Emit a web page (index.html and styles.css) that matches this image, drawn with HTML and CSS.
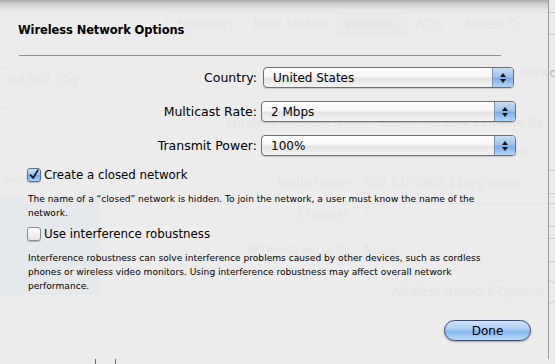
FILE: index.html
```html
<!DOCTYPE html>
<html>
<head>
<meta charset="utf-8">
<link rel="stylesheet" href="styles.css">
</head>
<body>
<div class="screen">
  <div class="ghost" aria-hidden="true">
    <div class="g-tabs">
      <span class="g-tab t1">Summary</span><span class="g-tab t2">Base Station</span><span class="g-tab t3 g-sel">Wireless</span><span class="g-tab t4">WDS</span><span class="g-tab t5">Access Co</span>
    </div>
    <div class="g-box g-box1"></div>
    <div class="g-box g-box2"></div>
    <div class="g-txt" style="left:6px;top:73px">old 802.11g</div>
    <div class="g-txt" style="left:520px;top:66px">netwo</div>
    <div class="g-txt" style="left:226px;top:116px">Wireless Network Name:</div>
    <div class="g-txt" style="left:380px;top:116px">Home Network Extreme Ba</div>
    <div class="g-txt" style="left:496px;top:145px">to be</div>
    <div class="g-txt" style="left:4px;top:174px">ress</div>
    <div class="g-txt" style="left:277px;top:176px">Radio Mode:</div>
    <div class="g-field" style="left:356px;top:170px;width:204px"></div>
    <div class="g-txt" style="left:364px;top:176px">802.11n (802.11b/g comp</div>
    <div class="g-txt" style="left:298px;top:208px">Channel:</div>
    <div class="g-field" style="left:356px;top:203px;width:204px"></div>
    <div class="g-txt" style="left:364px;top:208px">1</div>
    <div class="g-txt" style="left:247px;top:243px">Wireless Security:</div>
    <div class="g-field" style="left:356px;top:238px;width:204px"></div>
    <div class="g-txt" style="left:364px;top:243px">None</div>
    <div class="g-field g-btn" style="left:356px;top:280px;width:204px"></div>
    <div class="g-txt" style="left:390px;top:285px">Wireless Network Options</div>
    <div class="g-list"></div>
  </div>

  <div class="sheet">
    <h1 class="title">Wireless Network Options</h1>
    <div class="rule"></div>

    <div class="form">
      <label class="lbl">Country:</label>
      <div class="popup popup-country"><span class="pv">United States</span><span class="arrows"><i class="up"></i><i class="dn"></i></span></div>
      <label class="lbl">Multicast Rate:</label>
      <div class="popup"><span class="pv">2 Mbps</span><span class="arrows"><i class="up"></i><i class="dn"></i></span></div>
      <label class="lbl">Transmit Power:</label>
      <div class="popup"><span class="pv">100%</span><span class="arrows"><i class="up"></i><i class="dn"></i></span></div>
    </div>

    <div class="opt">
      <div class="check-row">
        <span class="cb cb-on"><svg viewBox="0 0 14 14" width="14" height="14"><path d="M3 7.2 L6 10.5 L11.5 1.5" fill="none" stroke="#1a1a2e" stroke-width="2" stroke-linecap="round" stroke-linejoin="round"/></svg></span>
        <span class="ct">Create a closed network</span>
      </div>
      <p class="desc">The name of a “closed” network is hidden. To join the network, a user must know the name of the<br>network.</p>
    </div>

    <div class="opt opt2">
      <div class="check-row">
        <span class="cb"></span>
        <span class="ct">Use interference robustness</span>
      </div>
      <p class="desc">Interference robustness can solve interference problems caused by other devices, such as cordless<br>phones or wireless video monitors. Using interference robustness may affect overall network<br>performance.</p>
    </div>

    <div class="actions">
      <button class="done">Done</button>
    </div>
  </div>
  <div class="under"><span class="u1"></span><span class="u2"></span></div>
</div>
</body>
</html>
```

FILE: styles.css
```css
* { box-sizing: border-box; }
html, body { margin: 0; padding: 0; }
body {
  width: 555px; height: 364px; overflow: hidden;
  background: #8c8c8c;
  font-family: "DejaVu Sans", "Liberation Sans", sans-serif;
  color: #000;
}
.screen { position: relative; width: 555px; height: 364px; background: #ececec; }

/* ghost window underneath (seen through the translucent sheet) */
.ghost { position: absolute; inset: 0; color: #b4b4b4; font-size: 12px; filter: blur(0.7px); }
.g-tabs {
  position: absolute; left: 166px; top: 12px; width: 400px; height: 23px;
  border: 1px solid #cdcdcd; border-radius: 4px; display: flex; white-space: nowrap;
}
.g-tab { padding-top: 4px; border-right: 1px solid #d0d0d0; font-size: 12px; text-align: center; }
.t1 { width: 79px; } .t2 { width: 92px; } .t3 { width: 68px; } .t4 { width: 49px; } .t5 { width: 112px; border-right: 0; text-align: left; padding-left: 10px; }
.g-sel { background: #dcdcdc; }
.g-txt { position: absolute; white-space: nowrap; }
.g-field { position: absolute; height: 24px; border: 1px solid #d0d0d0; border-radius: 3px; }
.g-btn { border-radius: 12px; }
.g-box { position: absolute; border: 1px solid #d0d0d0; border-radius: 4px; }
.g-box1 { left: -6px; top: 30px; width: 18px; height: 38px; }
.g-box2 { left: -6px; top: 108px; width: 18px; height: 58px; }
.g-list { position: absolute; left: 0; top: 196px; width: 100px; height: 99px; background: #c6d6e6; }

.sheet {
  position: relative; z-index: 1;
  width: 549px; height: 359px;
  background:
    linear-gradient(rgba(0,0,0,.28) 0, rgba(0,0,0,.12) 4px, rgba(0,0,0,.02) 10px, rgba(0,0,0,0) 13px),
    rgba(236,236,236,.84);
  border-right: 1px solid #9a9a9a;
  padding: 23px 0 0 18px;
  display: flex; flex-direction: column;
}
.title { margin: 0; font-size: 11.5px; font-weight: bold; line-height: 14px; letter-spacing: -0.1px; }
.rule { margin: 18px 0 0 1px; width: 482px; height: 1px; background: #8e8e8e; }

.form {
  display: grid; grid-template-columns: 239px 255px;
  column-gap: 4px; row-gap: 13px; margin-top: 11px; align-items: center;
}
.lbl { text-align: right; font-size: 12.5px; }
.popup {
  height: 21px; border: 1px solid #6f6f6f; border-radius: 4px;
  background: linear-gradient(#ffffff 0, #f6f6f6 45%, #e4e4e4 55%, #f4f4f4 100%);
  display: flex; align-items: center; justify-content: space-between; overflow: hidden;
  box-shadow: 0 1px 1px rgba(0,0,0,.15);
}
.popup-country { margin: 0 2px; }
.pv { padding-left: 9px; font-size: 12px; }
.arrows {
  width: 21px; height: 100%; border-left: 1px solid #7d8fb0;
  background: linear-gradient(#c9def5 0, #9fc3ee 45%, #7aaeea 55%, #b2d6fb 100%);
  display: flex; flex-direction: column; align-items: center; justify-content: center; gap: 2px;
}
.arrows i { display: block; width: 0; height: 0; border-left: 3px solid transparent; border-right: 3px solid transparent; }
.arrows .up { border-bottom: 4px solid #111; }
.arrows .dn { border-top: 4px solid #111; }

.opt { margin-top: 12px; padding-left: 9px; }
.opt2 { margin-top: 7px; }
.check-row { display: flex; align-items: center; gap: 3px; }
.cb {
  width: 14px; height: 14px; border: 1px solid #8a8a8a; border-radius: 3px;
  background: linear-gradient(#fdfdfd, #e6e6e6); display: inline-flex; align-items: center; justify-content: center;
  box-shadow: 0 1px 1px rgba(0,0,0,.2);
}
.cb-on { background: linear-gradient(#d5e6f9, #8fbdf0 50%, #6ea9ea 52%, #acd3fb); border-color: #5a6f9a; }
.ct { font-size: 11.8px; }
.desc { margin: 10px 0 0 1px; font-size: 9.1px; line-height: 14px; white-space: nowrap; }

.actions { margin-top: auto; display: flex; justify-content: flex-end; padding: 0 17px 18px 0; }
.done {
  width: 87px; height: 21px; border-radius: 11px; border: 1px solid #38497a;
  background: linear-gradient(#cfe3fb 0, #a9cdf5 45%, #86b8ef 55%, #b7dafc 100%);
  font-family: inherit; font-size: 12px; color: #000; padding: 0;
  box-shadow: 0 1px 2px rgba(0,0,0,.3);
}

.under { position: absolute; left: 0; top: 359px; width: 555px; height: 5px; }
.u1, .u2 { position: absolute; top: 0; width: 1px; height: 5px; background: #666; }
.u1 { left: 95px; } .u2 { left: 115px; }
```
